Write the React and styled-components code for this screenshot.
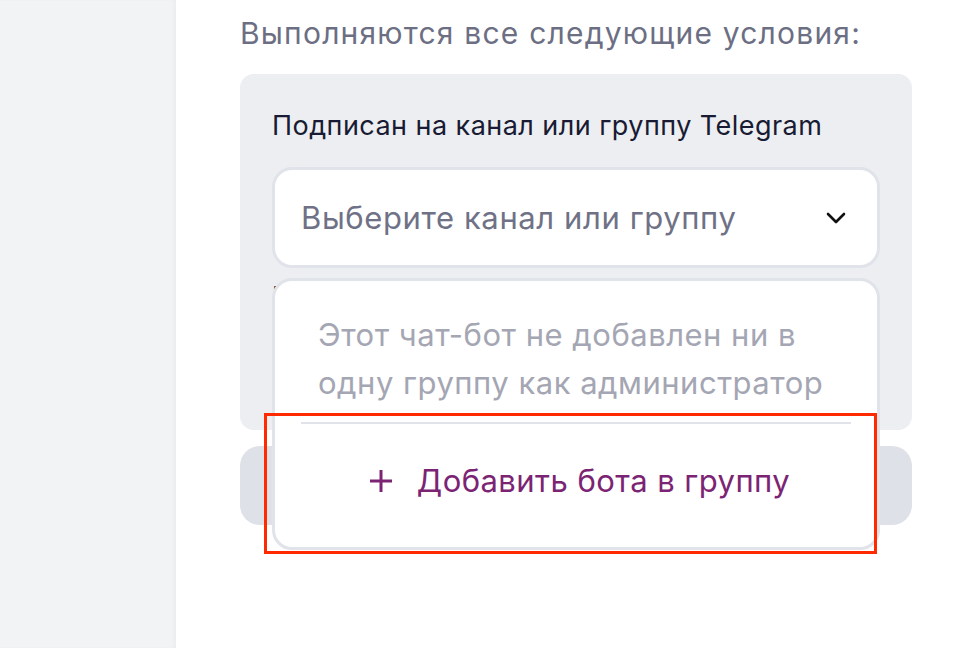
import React from 'react'
import styled, { createGlobalStyle } from 'styled-components'

const GlobalStyle = createGlobalStyle`
  html, body {
    margin: 0;
    padding: 0;
    background: #ffffff;
    font-family: Inter, "Noto Sans", sans-serif;
    -webkit-font-smoothing: antialiased;
  }
  * {
    box-sizing: border-box;
  }
`

const Page = styled.div`
  display: flex;
  height: 100vh;
  overflow: hidden;
`

const Sidebar = styled.aside`
  width: 176px;
  flex-shrink: 0;
  background-color: #f2f3f5;
  box-shadow: inset -3px 0 3px rgba(0, 0, 0, 0.025);
`

const Main = styled.main`
  flex: 1;
  padding: 16px 60px 0 64px;
`

const Heading = styled.h2`
  margin: 0 0 24px 0;
  font-size: 30px;
  line-height: 34px;
  font-weight: 400;
  color: #6c6f83;
  letter-spacing: 1.2px;
`

const Card = styled.div`
  background-color: #edeef1;
  border-radius: 14px;
  padding: 32px;
`

const Label = styled.div`
  font-size: 27px;
  line-height: 40px;
  color: #181b33;
  letter-spacing: 0.45px;
  margin-bottom: 21px;
`

const SelectWrap = styled.div`
  position: relative;
`

const Select = styled.div`
  height: 101px;
  display: flex;
  align-items: center;
  justify-content: space-between;
  padding: 0 31px 0 26px;
  background-color: #ffffff;
  border: 3px solid #e1e3ea;
  border-radius: 20px;
  font-size: 31px;
  letter-spacing: 0.6px;
  color: #6f7286;
`

const Hidden = styled.div`
  padding-top: 12px;
  height: 130px;
  font-size: 26px;
  color: #1b1e35;
`

const Dropdown = styled.div`
  position: absolute;
  top: calc(100% + 10px);
  left: 0;
  right: 0;
  z-index: 2;
  background-color: #ffffff;
  border: 3px solid #e1e3ea;
  border-radius: 20px;
`

const Message = styled.div`
  padding: 30px 30px 15px 43px;
  font-size: 31px;
  line-height: 48px;
  letter-spacing: 0.5px;
  color: #a4a6b3;
`

const Divider = styled.div`
  height: 2px;
  margin: 0 26px;
  background-color: #e1e3ea;
`

const AddButton = styled.div`
  height: 123px;
  display: flex;
  align-items: center;
  justify-content: center;
  gap: 24px;
  padding: 0 0 10px 7px;
  font-size: 31px;
  letter-spacing: 0.45px;
  color: #7c2474;
`

const Annotation = styled.div`
  position: absolute;
  left: -11px;
  right: 0;
  top: 132px;
  bottom: -7px;
  border: 3px solid #ff2a00;
  pointer-events: none;
`

const SubmitButton = styled.div`
  margin-top: 16px;
  height: 79px;
  border-radius: 20px;
  background-color: #dfe1e8;
`

const Chevron = () => (
  <svg width="20" height="12" viewBox="0 0 20 12" fill="none">
    <path d="M2 2l8 8 8-8" stroke="#111" strokeWidth="2.6" strokeLinecap="round" strokeLinejoin="round" />
  </svg>
)

const Plus = () => (
  <svg width="24" height="24" viewBox="0 0 24 24" fill="none">
    <path d="M12 1v22M1 12h22" stroke="#7c2474" strokeWidth="3" />
  </svg>
)

const App = () => (
  <Page>
    <GlobalStyle />
    <Sidebar />
    <Main>
      <Heading>Выполняются все следующие условия:</Heading>
      <Card>
        <Label>Подписан на канал или группу Telegram</Label>
        <SelectWrap>
          <Select>
            <span>Выберите канал или группу</span>
            <Chevron />
          </Select>
          <Dropdown>
            <Message>Этот чат-бот не добавлен ни в одну группу как администратор</Message>
            <Divider />
            <AddButton>
              <Plus />
              <span>Добавить бота в группу</span>
            </AddButton>
            <Annotation />
          </Dropdown>
        </SelectWrap>
        <Hidden>Показывать подписчикам</Hidden>
      </Card>
      <SubmitButton />
    </Main>
  </Page>
)

export default App
